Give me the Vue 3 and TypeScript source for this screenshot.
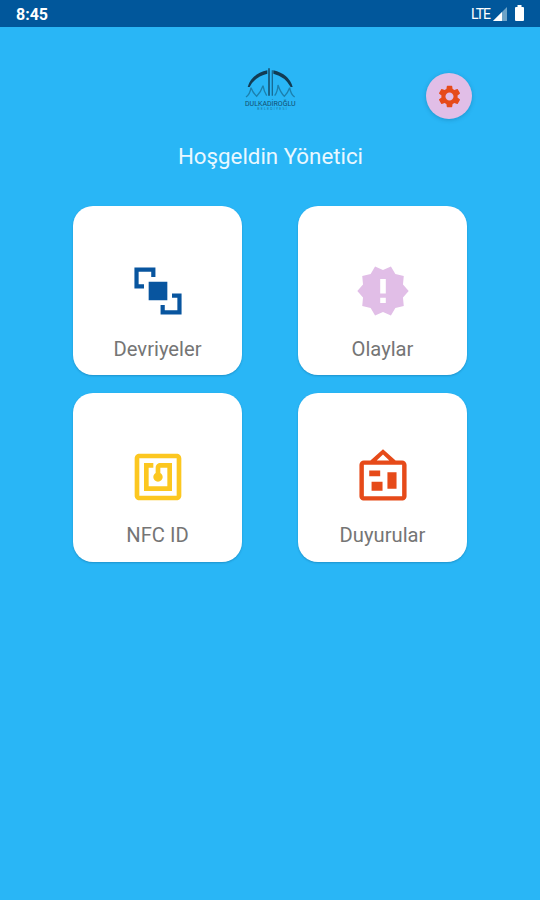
<script setup lang="ts">
interface Tile {
  label: string
  color: string
  path: string
}

const tiles: Tile[] = [
  {
    label: 'Devriyeler',
    color: '#08559f',
    path: 'M8 8h8v8H8zM10.9 6V1.9H1.9v9H6V9.1H3.7V3.7H9.1V6zM22.1 13.1H18v1.8h2.3v5.4h-5.4V18h-1.8v4.1h9z',
  },
  {
    label: 'Olaylar',
    color: '#e1bee7',
    path: 'M23 12l-2.44-2.78.34-3.68-3.61-.82-1.89-3.18L12 3 8.6 1.54 6.71 4.72l-3.61.81.34 3.68L1 12l2.44 2.78-.34 3.69 3.61.82 1.89 3.18L12 21l3.4 1.46 1.89-3.18 3.61-.82-.34-3.68L23 12zm-9.8 5.1h-2.4v-2.2h2.4zm0-4h-2.4V6.9h2.4z',
  },
  {
    label: 'NFC ID',
    color: '#fcc720',
    path: 'M20 2H4c-1.1 0-2 .9-2 2v16c0 1.1.9 2 2 2h16c1.1 0 2-.9 2-2V4c0-1.1-.9-2-2-2zm0 18H4V4h16v16zM18 6h-5c-1.1 0-2 .9-2 2v2.28c-.6.35-1 .98-1 1.72 0 1.1.9 2 2 2s2-.9 2-2c0-.74-.4-1.38-1-1.72V8h3v8H8V8h2V6H6v12h12V6z',
  },
  {
    label: 'Duyurular',
    color: '#e64a19',
    path: 'M20.2 4.9h-2.8L12 .1 6.6 4.9H3.8c-1 0-1.9.8-1.9 1.9v13.4c0 1 .9 1.9 1.9 1.9h16.4c1 0 1.9-.9 1.9-1.9V6.8c0-1.1-.9-1.9-1.9-1.9zM12 2.4l2.7 2.5H9.3zM20.2 20.2H3.8V6.8h16.4zM6.1 9.2h4.7v2.5H6.1zM7.1 14h4.7v3.9H7.1zM13.9 10h3.9v7h-3.9z',
  },
]
</script>

<template>
  <div class="screen">
    <header class="status">
      <span class="time">8:45</span>
      <span class="network">LTE</span>
      <svg class="signal" viewBox="0 0 14 14">
        <path d="M14 0v14H0z" fill="#6da3c7" />
        <path d="M9 5v9H0z" fill="#fff" />
      </svg>
      <svg class="battery" viewBox="0 0 9 16">
        <path d="M2.5 0h4v2H8q1 0 1 1v12q0 1-1 1H1q-1 0-1-1V3q0-1 1-1h1.5z" fill="#fff" />
      </svg>
    </header>

    <div class="top">
      <svg class="logo" viewBox="0 0 240 195">
        <path d="M53 96Q64 57 112 46V56Q75 65 59 96zM188 96Q177 57 130 46V56Q166 65 182 96z" fill="#123c54" />
        <path d="M117 40V122" stroke="#123c54" stroke-width="4" fill="none" />
        <path d="M127 46V122" stroke="#176b95" stroke-width="4" fill="none" />
        <path
          d="M48 126Q60 118 63 98Q68 112 80 124Q92 112 99 92Q102 110 110 122M134 122Q143 110 144 90Q151 112 163 124Q174 112 179 98Q182 118 194 126"
          stroke="#1c80ae"
          stroke-width="4"
          fill="none"
        />
        <text x="45" y="152" textLength="152" lengthAdjust="spacingAndGlyphs" class="brand">DULKADİROĞLU</text>
        <text x="82" y="165" textLength="88" class="brand-sub">BELEDİYESİ</text>
      </svg>
      <button class="settings" aria-label="Ayarlar">
        <svg viewBox="0 0 24 24">
          <path
            fill="#e64a19"
            d="M19.14 12.94c.04-.3.06-.61.06-.94 0-.32-.02-.64-.07-.94l2.03-1.58c.18-.14.23-.41.12-.61l-1.92-3.32c-.12-.22-.37-.29-.59-.22l-2.39.96c-.5-.38-1.03-.7-1.62-.94l-.36-2.54c-.04-.24-.24-.41-.48-.41h-3.84c-.24 0-.43.17-.47.41l-.36 2.54c-.59.24-1.13.57-1.62.94l-2.39-.96c-.22-.08-.47 0-.59.22L2.74 8.87c-.12.21-.08.47.12.61l2.03 1.58c-.05.3-.09.63-.09.94s.02.64.07.94l-2.03 1.58c-.18.14-.23.41-.12.61l1.92 3.32c.12.22.37.29.59.22l2.39-.96c.5.38 1.03.7 1.62.94l.36 2.54c.05.24.24.41.48.41h3.84c.24 0 .44-.17.47-.41l.36-2.54c.59-.24 1.13-.56 1.62-.94l2.39.96c.22.08.47 0 .59-.22l1.92-3.32c.12-.22.07-.47-.12-.61l-2.01-1.58zM12 15.6c-1.98 0-3.6-1.62-3.6-3.6s1.62-3.6 3.6-3.6 3.6 1.62 3.6 3.6-1.62 3.6-3.6 3.6z"
          />
        </svg>
      </button>
    </div>

    <h1 class="welcome">Hoşgeldin Yönetici</h1>

    <main class="grid">
      <section v-for="tile in tiles" :key="tile.label" class="card">
        <svg class="icon" viewBox="0 0 24 24">
          <path :d="tile.path" :fill="tile.color" fill-rule="evenodd" />
        </svg>
        <span class="label">{{ tile.label }}</span>
      </section>
    </main>
  </div>
</template>

<style>
body {
  margin: 0;
  background: #29b6f6;
}
</style>

<style scoped>
.screen {
  width: 540px;
  height: 900px;
  box-sizing: border-box;
  overflow: hidden;
  background: #29b6f6;
  font-family: Roboto, "Liberation Sans", sans-serif;
}

.status {
  display: flex;
  align-items: center;
  height: 27px;
  padding: 0 16px;
  background: #01579b;
  color: #fff;
}

.time {
  flex: 1;
  font-size: 16px;
  font-weight: 700;
  line-height: 27px;
  padding-top: 1px;
}

.network {
  font-size: 14px;
  letter-spacing: -1px;
  padding-top: 1px;
  margin-right: 3px;
}

.signal {
  width: 14px;
  height: 14px;
  margin-right: 8px;
}

.battery {
  width: 9px;
  height: 16px;
  margin-top: -2px;
}

.top {
  display: grid;
  grid-template-columns: 1fr 80px 1fr;
  height: 93px;
  padding-top: 28px;
  box-sizing: border-box;
}

.logo {
  grid-column: 2;
  width: 80px;
  height: 65px;
}

.brand {
  font: 24px Roboto, sans-serif;
  fill: #124f70;
}

.brand-sub {
  font: 10px Roboto, sans-serif;
  fill: #1b769f;
}

.settings {
  display: flex;
  align-items: center;
  justify-content: center;
  justify-self: start;
  width: 46px;
  height: 46px;
  margin: 18px 0 0 116px;
  padding: 0;
  border: 0;
  border-radius: 50%;
  background: #e1bee7;
  box-shadow: 0 1px 4px rgba(0, 55, 90, 0.25);
}

.settings svg {
  width: 27px;
  height: 27px;
}

.welcome {
  margin: 22px 0 0;
  padding-left: 1px;
  text-align: center;
  color: #e9f8ff;
  font-size: 22.3px;
  font-weight: 400;
  line-height: 28px;
}

.grid {
  display: grid;
  grid-template-columns: 169.5px 169.5px;
  grid-auto-rows: 169px;
  justify-content: center;
  gap: 17.5px 55.5px;
  margin-top: 36px;
}

.card {
  display: flex;
  flex-direction: column;
  align-items: center;
  box-sizing: border-box;
  padding-top: 56.7px;
  border-radius: 20px;
  background: #fff;
  box-shadow: 0 1px 2px rgba(0, 65, 110, 0.3);
}

.icon {
  width: 56px;
  height: 56px;
}

.label {
  margin-top: 18px;
  color: #757575;
  font-size: 20.2px;
  line-height: 24px;
}
</style>
